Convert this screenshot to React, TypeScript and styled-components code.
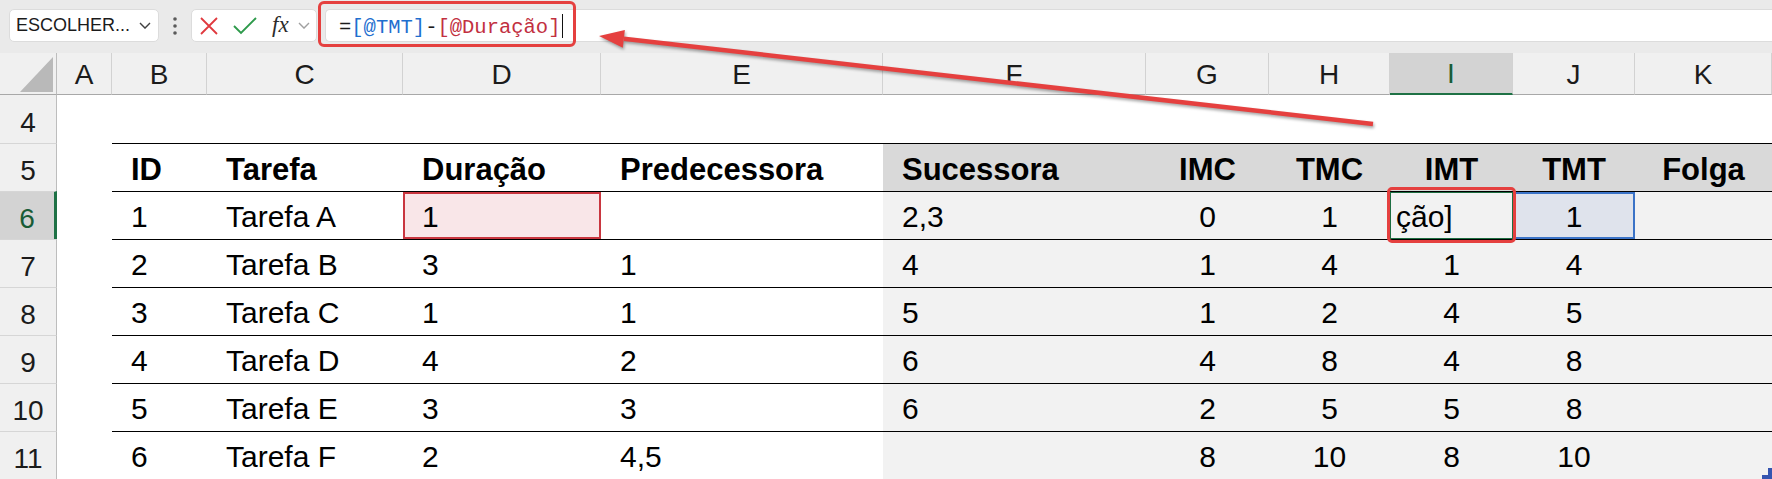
import React from "react";
import styled, { createGlobalStyle } from "styled-components";

const GlobalStyle = createGlobalStyle`
  html, body { margin: 0; padding: 0; background: #ffffff; }
  body { overflow: hidden; font-family: "Liberation Sans", Arial, sans-serif; }
`;

const COLUMN_TEMPLATE =
  "57px 55px 95px 196px 198px 282px 263px 123px 121px 123px 122px 137px";

const Sheet = styled.div`
  position: relative;
  width: 1772px;
  height: 479px;
  overflow: hidden;
  background: #ffffff;
  color: #000000;
`;

/* ---------- formula bar ---------- */

const FormulaBar = styled.div`
  box-sizing: border-box;
  height: 53px;
  padding: 9px 0 0 9px;
  background: #eaeaea;
  display: flex;
  align-items: flex-start;
`;

const Field = styled.div`
  box-sizing: border-box;
  height: 33px;
  background: #ffffff;
  border: 1px solid #dcdcdc;
  border-radius: 5px;
  display: flex;
  align-items: center;
`;

const NameBox = styled(Field)`
  width: 150px;
  padding: 0 7px 0 6px;
  justify-content: space-between;
  font-family: "Liberation Sans", Arial, sans-serif;
  font-size: 18px;
  color: #1b1b1b;
`;

const MoreHandle = styled.div`
  width: 32px;
  height: 33px;
  display: flex;
  align-items: center;
  justify-content: center;
`;

const ActionBox = styled(Field)`
  width: 126px;
  padding-left: 7px;
`;

const ActionIcon = styled.span<{ $gap?: number }>`
  display: flex;
  align-items: center;
  margin-left: ${(p) => p.$gap ?? 0}px;
`;

const Fx = styled.span`
  margin-left: 15px;
  font-family: "Liberation Serif", "Times New Roman", serif;
  font-style: italic;
  font-size: 23px;
  color: #2b2b2b;
  line-height: 1;
  padding-bottom: 3px;
`;

const FormulaInput = styled(Field)`
  flex: 1;
  margin-left: 8px;
  border-right: none;
  border-radius: 5px 0 0 5px;
  padding: 4px 0 0 13px;
  font-family: "Liberation Mono", "DejaVu Sans Mono", monospace;
  font-size: 20.5px;
  white-space: pre;
`;

const Token = styled.span<{ $tone?: "blue" | "red" }>`
  color: ${(p) =>
    p.$tone === "blue" ? "#1f6fcf" : p.$tone === "red" ? "#c2303f" : "#1b1b1b"};
`;

const Caret = styled.span`
  width: 0;
  height: 24px;
  margin: -3px 0 0 2px;
  border-left: 1.5px solid #111111;
`;

/* ---------- column header ---------- */

const HeaderRow = styled.div`
  display: grid;
  grid-template-columns: ${COLUMN_TEMPLATE};
  height: 42px;
`;

const Corner = styled.div`
  box-sizing: border-box;
  background: #f0f0f0;
  border-right: 1px solid #bdbdbd;
  border-bottom: 1px solid #a8a8a8;
  display: flex;
  align-items: flex-end;
  justify-content: flex-end;
  padding: 0 3px 2px 0;
`;

const ColumnLetter = styled.div<{ $active?: boolean }>`
  box-sizing: border-box;
  display: flex;
  align-items: center;
  justify-content: center;
  padding-top: 2px;
  background: ${(p) => (p.$active ? "#d3d3d3" : "#f0f0f0")};
  border-right: 1px solid #d2d2d2;
  border-bottom: ${(p) => (p.$active ? "2px solid #1e7145" : "1px solid #a8a8a8")};
  font-family: "Liberation Sans", Arial, sans-serif;
  font-size: 28px;
  line-height: 1;
  color: ${(p) => (p.$active ? "#185c37" : "#1b1b1b")};
`;

/* ---------- grid rows ---------- */

const GridRow = styled.div`
  display: grid;
  grid-template-columns: ${COLUMN_TEMPLATE};
  height: 48px;
`;

const RowNumber = styled.div<{ $active?: boolean; $first?: boolean }>`
  box-sizing: border-box;
  display: flex;
  align-items: flex-end;
  justify-content: center;
  padding-bottom: 6px;
  background: ${(p) => (p.$active ? "#d3d3d3" : "#f0f0f0")};
  border-right: ${(p) => (p.$active ? "3px solid #1e7145" : "1px solid #bdbdbd")};
  border-top: ${(p) => (p.$first ? "none" : "1px solid #d6d6d6")};
  font-size: 28px;
  line-height: 1;
  color: ${(p) => (p.$active ? "#185c37" : "#1b1b1b")};
`;

type Mark = "red" | "blue" | "edit";

const Cell = styled.div<{
  $align?: "left" | "center";
  $tone?: "head" | "body";
  $header?: boolean;
  $ruled?: boolean;
  $mark?: Mark;
}>`
  box-sizing: border-box;
  display: flex;
  align-items: flex-end;
  justify-content: ${(p) => (p.$align === "center" ? "center" : "flex-start")};
  padding-left: ${(p) => (p.$align === "center" ? 0 : p.$mark === "edit" ? 6 : 19)}px;
  padding-bottom: ${(p) => (p.$header ? 6 : 7)}px;
  overflow: hidden;
  white-space: nowrap;
  font-size: ${(p) => (p.$header ? 31 : 30)}px;
  font-weight: ${(p) => (p.$header ? 700 : 400)};
  line-height: 1;
  color: #000000;
  border-top: ${(p) => (p.$ruled ? "1px solid #000000" : "none")};
  background: ${(p) =>
    p.$mark === "red"
      ? "#f9e6e8"
      : p.$mark === "blue"
      ? "#dfe3ec"
      : p.$tone === "head"
      ? "#d9d9d9"
      : p.$tone === "body"
      ? "#f2f2f2"
      : "#ffffff"};
  box-shadow: ${(p) =>
    p.$mark === "red"
      ? "inset 0 0 0 2px #c9363f"
      : p.$mark === "blue"
      ? "inset 0 0 0 2px #3b73c7"
      : p.$mark === "edit"
      ? "inset 0 0 0 1px #1e6e42"
      : "none"};
`;

/* ---------- overlays ---------- */

const Callout = styled.div`
  position: absolute;
  box-sizing: border-box;
  border: 3.5px solid #e5403f;
  border-radius: 6px;
  pointer-events: none;
`;

const FormulaCallout = styled(Callout)`
  left: 318px;
  top: 1px;
  width: 258px;
  height: 46px;
`;

const CellCallout = styled(Callout)`
  left: 1387px;
  top: 187px;
  width: 129px;
  height: 56px;
  border-radius: 5px;
`;

const ArrowLayer = styled.svg`
  position: absolute;
  left: 0;
  top: 0;
  width: 1772px;
  height: 479px;
  pointer-events: none;
  filter: drop-shadow(1px 2px 1.5px rgba(0, 0, 0, 0.35));
`;

const ResizeHandle = styled.svg`
  position: absolute;
  right: 0;
  bottom: 0;
  width: 10px;
  height: 11px;
`;

/* ---------- data ---------- */

type Entry = string | { text: string; mark: Mark };

const LETTERS = ["A", "B", "C", "D", "E", "F", "G", "H", "I", "J", "K"];
const HEADERS = ["ID", "Tarefa", "Duração", "Predecessora", "Sucessora", "IMC", "TMC", "IMT", "TMT", "Folga"];
const ALIGN: ("left" | "center")[] = ["left", "left", "left", "left", "left", "center", "center", "center", "center", "center"];
const SHADED = [false, false, false, false, true, true, true, true, true, true];

const BODY: { row: number; active?: boolean; cells: Entry[] }[] = [
  {
    row: 6,
    active: true,
    cells: ["1", "Tarefa A", { text: "1", mark: "red" }, "", "2,3", "0", "1", { text: "ção]", mark: "edit" }, { text: "1", mark: "blue" }, ""],
  },
  { row: 7, cells: ["2", "Tarefa B", "3", "1", "4", "1", "4", "1", "4", ""] },
  { row: 8, cells: ["3", "Tarefa C", "1", "1", "5", "1", "2", "4", "5", ""] },
  { row: 9, cells: ["4", "Tarefa D", "4", "2", "6", "4", "8", "4", "8", ""] },
  { row: 10, cells: ["5", "Tarefa E", "3", "3", "6", "2", "5", "5", "8", ""] },
  { row: 11, cells: ["6", "Tarefa F", "2", "4,5", "", "8", "10", "8", "10", ""] },
];

/* ---------- icons ---------- */

const Chevron = ({ color, size = 12 }: { color: string; size?: number }) => (
  <svg width={size} height={size * 0.6} viewBox="0 0 12 7">
    <polyline points="1,1 6,6 11,1" fill="none" stroke={color} strokeWidth="1.4" />
  </svg>
);

const Dots = () => (
  <svg width="4" height="18" viewBox="0 0 4 18">
    <circle cx="2" cy="2" r="1.8" fill="#5a5a5a" />
    <circle cx="2" cy="9" r="1.8" fill="#5a5a5a" />
    <circle cx="2" cy="16" r="1.8" fill="#5a5a5a" />
  </svg>
);

const CancelIcon = () => (
  <svg width="20" height="20" viewBox="0 0 20 20">
    <path d="M2 2 L18 18 M18 2 L2 18" stroke="#e0393e" strokeWidth="1.8" fill="none" />
  </svg>
);

const EnterIcon = () => (
  <svg width="24" height="18" viewBox="0 0 24 18">
    <polyline points="1,9 8,16 23,1" stroke="#2e9a4b" strokeWidth="1.9" fill="none" />
  </svg>
);

const CornerTriangle = () => (
  <svg width="33" height="35" viewBox="0 0 33 35">
    <polygon points="0,35 33,35 33,0" fill="#b9b9b9" />
  </svg>
);

/* ---------- app ---------- */

function renderEntry(e: Entry) {
  return typeof e === "string" ? { text: e, mark: undefined } : e;
}

export default function App() {
  const tipX = 599;
  const tipY = 36;
  const tailX = 1373;
  const tailY = 124;
  const len = Math.hypot(tailX - tipX, tailY - tipY);
  const ux = (tipX - tailX) / len;
  const uy = (tipY - tailY) / len;
  const nx = -uy;
  const ny = ux;
  const headLen = 25;
  const headHalf = 9;
  const bx = tipX - headLen * ux;
  const by = tipY - headLen * uy;
  const head = `${tipX},${tipY} ${bx + headHalf * nx},${by + headHalf * ny} ${bx - headHalf * nx},${by - headHalf * ny}`;

  return (
    <>
      <GlobalStyle />
      <Sheet>
        <FormulaBar>
          <NameBox>
            <span>ESCOLHER...</span>
            <Chevron color="#404040" />
          </NameBox>
          <MoreHandle>
            <Dots />
          </MoreHandle>
          <ActionBox>
            <ActionIcon>
              <CancelIcon />
            </ActionIcon>
            <ActionIcon $gap={14}>
              <EnterIcon />
            </ActionIcon>
            <Fx>fx</Fx>
            <ActionIcon $gap={9}>
              <Chevron color="#a0a0a0" />
            </ActionIcon>
          </ActionBox>
          <FormulaInput>
            <Token>=</Token>
            <Token $tone="blue">[@TMT]</Token>
            <Token>-</Token>
            <Token $tone="red">[@Duração]</Token>
            <Caret />
          </FormulaInput>
        </FormulaBar>

        <HeaderRow>
          <Corner>
            <CornerTriangle />
          </Corner>
          {LETTERS.map((l) => (
            <ColumnLetter key={l} $active={l === "I"}>
              {l}
            </ColumnLetter>
          ))}
        </HeaderRow>

        <GridRow>
          <RowNumber $first>4</RowNumber>
          <Cell />
          {HEADERS.map((h) => (
            <Cell key={h} />
          ))}
        </GridRow>

        <GridRow>
          <RowNumber>5</RowNumber>
          <Cell />
          {HEADERS.map((h, i) => (
            <Cell key={h} $header $ruled $align={ALIGN[i]} $tone={SHADED[i] ? "head" : undefined}>
              {h}
            </Cell>
          ))}
        </GridRow>

        {BODY.map((r) => (
          <GridRow key={r.row}>
            <RowNumber $active={r.active}>{r.row}</RowNumber>
            <Cell />
            {r.cells.map((c, i) => {
              const { text, mark } = renderEntry(c);
              return (
                <Cell
                  key={i}
                  $ruled
                  $align={mark === "edit" ? "left" : ALIGN[i]}
                  $tone={SHADED[i] ? "body" : undefined}
                  $mark={mark}
                >
                  {text}
                </Cell>
              );
            })}
          </GridRow>
        ))}

        <FormulaCallout />
        <CellCallout />

        <ArrowLayer viewBox="0 0 1772 479">
          <line x1={tailX} y1={tailY} x2={bx} y2={by} stroke="#e5403f" strokeWidth="4.5" strokeLinecap="butt" />
          <polygon points={head} fill="#e5403f" />
        </ArrowLayer>

        <ResizeHandle viewBox="0 0 10 11">
          <path d="M6 0 H10 V11 H0 V7 H6 Z" fill="#3555b0" />
        </ResizeHandle>
      </Sheet>
    </>
  );
}
